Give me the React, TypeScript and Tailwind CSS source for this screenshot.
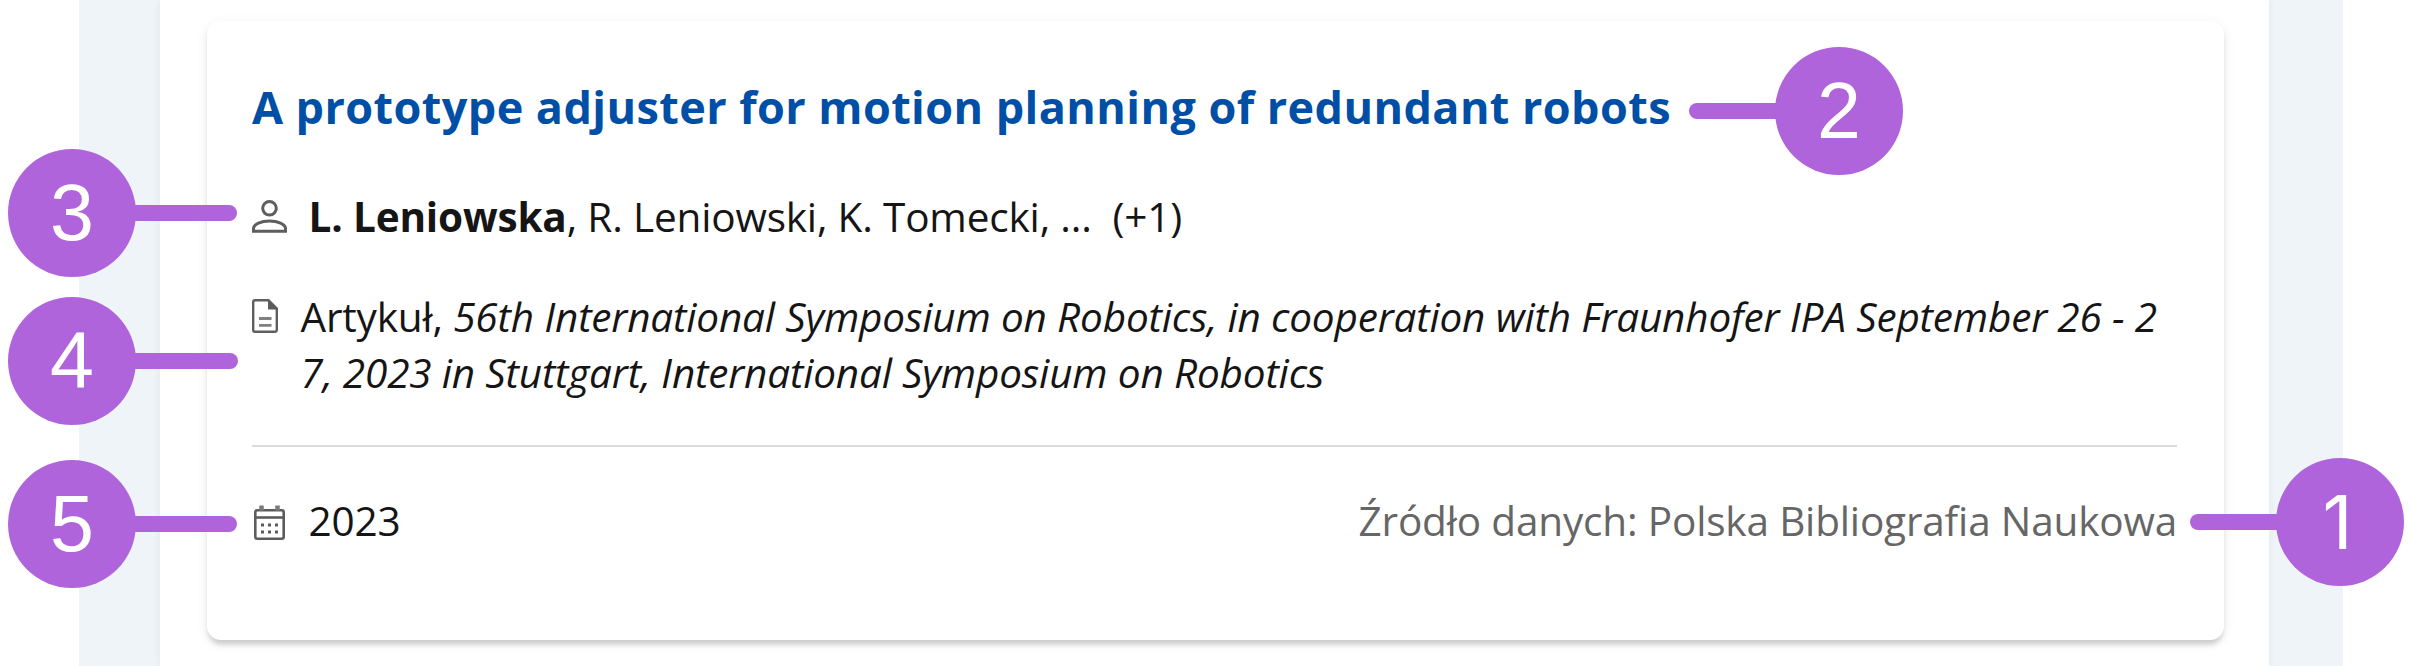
import React from 'react';
import clsx from 'clsx';

interface MarkerProps {
  label: string;
  side: 'left' | 'right';
  className: string;
}

// Numbered callout: a circle with a rounded pointer towards the card
const Marker: React.FC<MarkerProps> = ({ label, side, className }) => (
  <div
    className={clsx(
      'absolute flex items-center',
      side === 'right' && 'flex-row-reverse',
      className,
    )}
  >
    <div
      className={clsx(
        'flex size-32 shrink-0 items-center justify-center rounded-full bg-[#b064db] text-white',
        label === '1'
          ? "pr-[5px] font-['Inter','Liberation_Sans',sans-serif] text-[74px]"
          : "pb-[2px] font-['Liberation_Sans',Arial,sans-serif] text-[79px]",
      )}
    >
      <span className="leading-none">{label}</span>
    </div>
    <div
      className={clsx(
        'h-4 grow bg-[#b064db]',
        side === 'left' ? '-ml-1 rounded-r-full' : '-mr-1 rounded-l-full',
      )}
    />
  </div>
);

const PersonIcon = () => (
  <svg className="h-[33px] w-[35px] shrink-0" viewBox="0 0 35 33" fill="none" stroke="#5e5e5e" strokeWidth="3">
    <circle cx="17.5" cy="8.3" r="6.8" />
    <path d="M1.500 31.300v-2.800c0-4.300 7.800-7.500 16-7.500s16 3.200 16 7.500v2.800z" />
  </svg>
);

const DocumentIcon = () => (
  <svg className="h-[34px] w-[26px] shrink-0" viewBox="0 0 26 34" fill="none" stroke="#5e5e5e" strokeWidth="2.4">
    <path d="M3 1.200h13.500L24.800 9.500V31a1.800 1.800 0 0 1-1.800 1.800H3A1.800 1.800 0 0 1 1.200 31V3A1.800 1.800 0 0 1 3 1.200z" />
    <path d="M16 .5v10h9.500z" fill="#5c5c5c" stroke="none" />
    <path d="M7 19.500h12.500M7 26.300h12.500" stroke="#808080" strokeWidth="2.800" />
  </svg>
);

const CalendarIcon = () => (
  <svg className="h-[35px] w-[31px] shrink-0" viewBox="0 0 31 35" fill="none" stroke="#5c5c5c" strokeWidth="2.6">
    <rect x="1.300" y="5.300" width="28.400" height="28.400" rx="2" />
    <path d="M1 12.500h29" />
    <path d="M7.500 .5v5M23.500 .5v5" strokeWidth="4.500" stroke="#7a7a7a" />
    <path d="M7 20h3M14 20h3M21 20h3M7 27h3M14 27h3M21 27h3" strokeWidth="3" />
  </svg>
);

const PublicationCard = () => (
  <article className="flex h-[619px] w-[2017px] flex-col rounded-[14px] bg-white px-[45px] shadow-[0_7px_5px_-3px_rgba(0,0,0,0.09),0_5px_5px_rgba(0,0,0,0.08),0_3px_13px_rgba(0,0,0,0.07)]">
    <h2 className="mt-[56px] text-[45px] leading-[60px] font-bold tracking-[0.42px] whitespace-nowrap text-[#004fa6]">
      A prototype adjuster for motion planning of redundant robots
    </h2>

    <div className="mt-[51px] flex items-center gap-[21.500px]">
      <PersonIcon />
      <p className="pt-px leading-[56px] whitespace-pre">
        <strong>L. Leniowska</strong>, R. Leniowski, K. Tomecki, ...  (+1)
      </p>
    </div>

    <div className="mt-[44px] flex gap-[22.500px]">
      <div className="pt-[10px]">
        <DocumentIcon />
      </div>
      <p className="leading-[55.500px] whitespace-nowrap">
        Artykuł,{' '}
        <em>
          56th International Symposium on Robotics, in cooperation with Fraunhofer IPA September 26 - 2
          <br />
          7, 2023 in Stuttgart, International Symposium on Robotics
        </em>
      </p>
    </div>

    <div className="mt-[45px] mr-[2px] border-t-2 border-[#dadada]" />

    <div className="mt-[46px] mr-[2px] flex items-center justify-between leading-[56px]">
      <div className="flex items-center gap-[23.500px] pl-[2px]">
        <div className="pt-[2px]">
          <CalendarIcon />
        </div>
        <span>2023</span>
      </div>
      <span className="text-[#666]">Źródło danych: Polska Bibliografia Naukowa</span>
    </div>
  </article>
);

const App: React.FC = () => (
  <div className="relative flex h-[666px] w-[2412px] justify-start overflow-hidden bg-white pl-[79px] font-['Open_Sans','Noto_Sans',sans-serif] text-[40.500px] tracking-[-0.17px] text-[#151515]">
    <main className="w-[2264px] bg-[#eff4f9] pr-[74px] pl-[81px]">
      <div className="h-full bg-white pt-[21px] pl-[47px] shadow-[0_0_8px_rgba(0,0,0,0.06)]">
        <PublicationCard />
      </div>
    </main>

    <Marker label="1" side="right" className="top-[458px] left-[2190px] w-[214px]" />
    <Marker label="2" side="right" className="top-[47px] left-[1689px] w-[214px]" />
    <Marker label="3" side="left" className="top-[149px] left-[8px] w-[229px]" />
    <Marker label="4" side="left" className="top-[296.500px] left-[8px] w-[230px]" />
    <Marker label="5" side="left" className="top-[460px] left-[8px] w-[229px]" />
  </div>
);

export default App;
